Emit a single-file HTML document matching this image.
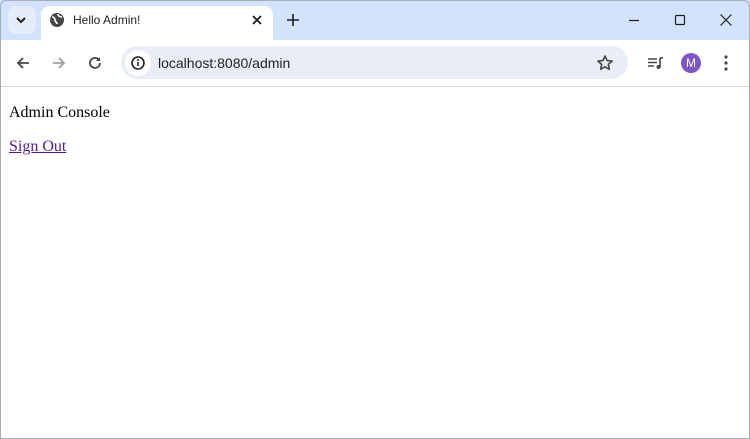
<!DOCTYPE html>
<html><head><style>
*{margin:0;padding:0;box-sizing:border-box}
body{width:750px;height:439px;overflow:hidden;background:#fff;position:relative;font-family:"Liberation Sans",sans-serif}
.abs{position:absolute}
#frame{left:0;top:0;width:750px;height:439px;border:1px solid #a8aeb8;border-radius:6px 6px 0 0;z-index:10;pointer-events:none}
#title{left:0;top:0;width:750px;height:40px;background:#d3e3fd}
#tab{left:41px;top:6px;width:232px;height:35px;background:#fff;border-radius:9px 9px 0 0}
#toolbar{left:0;top:40px;width:750px;height:47px;background:#fff;border-bottom:1px solid #d5d8dc}
#addr{left:121px;top:46px;width:507px;height:33px;background:#e9eef6;border-radius:17px}
svg{position:absolute}
</style></head><body>
<div id="title" class="abs"></div>
<div class="abs" style="left:8px;top:6px;width:28px;height:28px;background:#e4ebf9;border-radius:8px"></div>
<svg style="left:14px;top:14px" width="14" height="12"><path d="M3 4l4 4 4-4" stroke="#1f1f1f" stroke-width="2" fill="none"/></svg>
<div id="tab" class="abs"></div>
<svg style="left:49px;top:12px" width="16" height="16"><circle cx="8" cy="8" r="7" fill="#474747"/><path d="M3 5c2 0 3 1 3 3s2 2 2 4M9 2c0 2 2 3 4 3" stroke="#fff" stroke-width="1.6" fill="none"/></svg>
<div class="abs" style="left:73px;top:13px;font-size:12px;color:#1f1f1f">Hello Admin!</div>
<svg style="left:251px;top:14px" width="12" height="12"><path d="M2 2l8 8M10 2l-8 8" stroke="#1f1f1f" stroke-width="1.8"/></svg>
<svg style="left:286px;top:13px" width="14" height="14"><path d="M7 1v12M1 7h12" stroke="#1f1f1f" stroke-width="1.6"/></svg>
<svg style="left:628px;top:14px" width="12" height="12"><path d="M1 6.5h10" stroke="#1f1f1f" stroke-width="1.2"/></svg>
<svg style="left:674px;top:14px" width="12" height="12"><rect x="1.5" y="1.5" width="9" height="9" rx="1" stroke="#1f1f1f" stroke-width="1.2" fill="none"/></svg>
<svg style="left:719px;top:13px" width="14" height="14"><path d="M1.5 1.5l11 11M12.5 1.5l-11 11" stroke="#1f1f1f" stroke-width="1.2"/></svg>
<div id="toolbar" class="abs"></div>
<svg style="left:15px;top:55px" width="16" height="16"><path d="M14 8H3M8 3L3 8l5 5" stroke="#474747" stroke-width="1.8" fill="none"/></svg>
<svg style="left:51px;top:55px" width="16" height="16"><path d="M2 8h11M8 3l5 5-5 5" stroke="#a0a0a0" stroke-width="1.8" fill="none"/></svg>
<svg style="left:87px;top:55px" width="16" height="16"><path d="M13 8a5 5 0 1 1-1.5-3.6" stroke="#474747" stroke-width="1.8" fill="none"/><path d="M13 2v4H9z" fill="#474747"/></svg>
<div id="addr" class="abs"></div>
<div class="abs" style="left:125px;top:50px;width:26px;height:26px;background:#fff;border-radius:13px"></div>
<svg style="left:131px;top:56px" width="14" height="14"><circle cx="7" cy="7" r="6" stroke="#1f1f1f" stroke-width="1.6" fill="none"/><path d="M7 6v4" stroke="#1f1f1f" stroke-width="1.6"/><circle cx="7" cy="4" r="1" fill="#1f1f1f"/></svg>
<div class="abs" style="left:158px;top:55px;font-size:14px;color:#1f1f1f">localhost:8080/admin</div>
<svg style="left:596px;top:54px" width="18" height="18"><path d="M9 2l2.1 4.6 5 .5-3.8 3.3 1.1 4.9L9 12.8 4.6 15.3l1.1-4.9L1.9 7.1l5-.5z" stroke="#474747" stroke-width="1.6" fill="none" stroke-linejoin="round"/></svg>
<svg style="left:647px;top:55px" width="18" height="16"><path d="M1 4h9M1 7.5h9M1 11h6" stroke="#474747" stroke-width="1.6"/><path d="M13 3v9" stroke="#474747" stroke-width="1.6"/><path d="M13 3h3" stroke="#474747" stroke-width="1.6"/><circle cx="11.5" cy="12" r="2" fill="#474747"/></svg>
<div class="abs" style="left:681px;top:53px;width:20px;height:20px;border-radius:10px;background:#7e57c2;color:#fff;font-size:12px;text-align:center;line-height:20px">M</div>
<svg style="left:722px;top:54px" width="8" height="18"><circle cx="4" cy="3" r="1.6" fill="#474747"/><circle cx="4" cy="9" r="1.6" fill="#474747"/><circle cx="4" cy="15" r="1.6" fill="#474747"/></svg>
<div class="abs" style="left:9px;top:104px;font-family:'Liberation Serif',serif;font-size:16px;color:#000">Admin Console</div>
<a class="abs" style="left:9px;top:138px;font-family:'Liberation Serif',serif;font-size:16px;color:#551a8b;text-decoration:underline">Sign Out</a>
<div id="frame" class="abs"></div>
</body></html>
